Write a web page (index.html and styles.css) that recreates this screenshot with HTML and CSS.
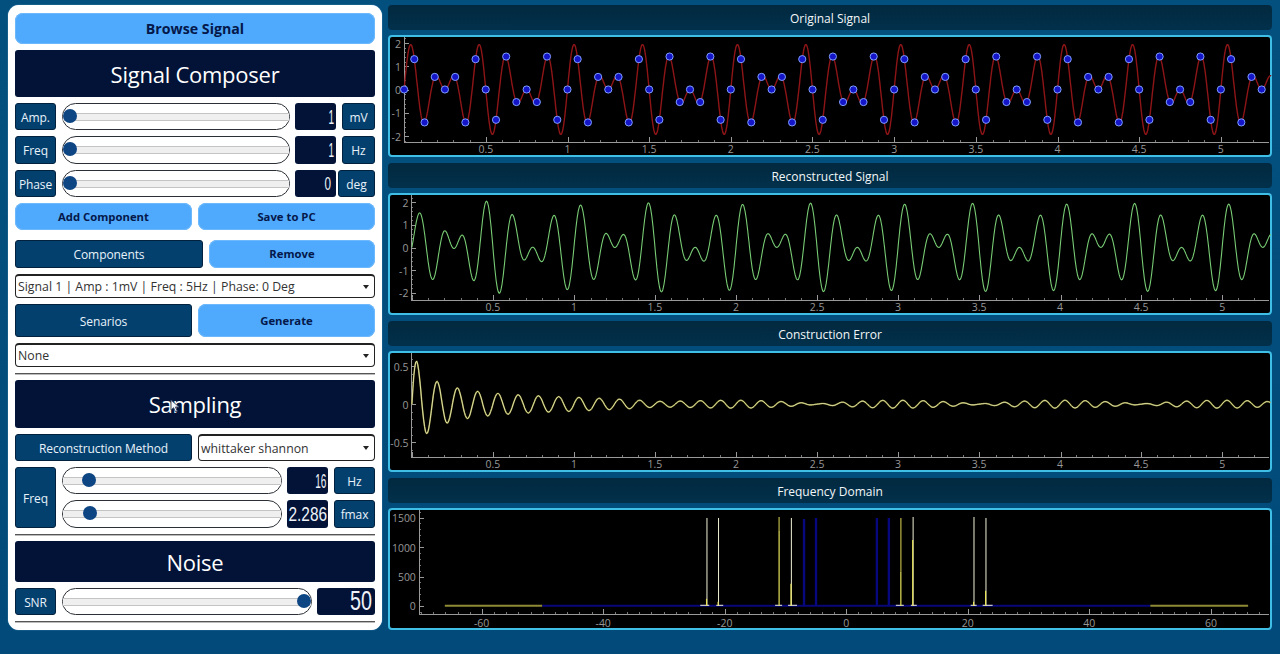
FILE: index.html
```html
<!DOCTYPE html>
<html lang="en">
<head>
<meta charset="utf-8">
<title>Signal Studio</title>
<link rel="stylesheet" href="styles.css">
</head>
<body>
<main class="app">
  <section class="panel">
    <button class="btn light browse">Browse Signal</button>
    <h2 class="heading h-composer">Signal Composer</h2>

    <div class="row r27">
      <span class="tag w41">Amp.</span>
      <div class="slider"><i class="groove"></i><i class="thumb" style="left:0px"></i></div>
      <output class="lcd w41"><span class="digits d-small">1</span></output>
      <span class="tag w33">mV</span>
    </div>
    <div class="row r28">
      <span class="tag w41">Freq</span>
      <div class="slider"><i class="groove"></i><i class="thumb" style="left:0px"></i></div>
      <output class="lcd w41"><span class="digits d-small">1</span></output>
      <span class="tag w33">Hz</span>
    </div>
    <div class="row r27">
      <span class="tag w41">Phase</span>
      <div class="slider"><i class="groove"></i><i class="thumb" style="left:0px"></i></div>
      <output class="lcd w41"><span class="digits d-zero">0</span></output>
      <span class="tag w37">deg</span>
    </div>

    <div class="row r27 halves">
      <button class="btn light lift">Add Component</button>
      <button class="btn light lift">Save to PC</button>
    </div>
    <div class="row r28 split-comp">
      <span class="tag">Components</span>
      <button class="btn light lift">Remove</button>
    </div>
    <div class="combo"><span>Signal 1 | Amp : 1mV | Freq : 5Hz | Phase: 0 Deg</span><b class="caret"></b></div>
    <div class="row r33 halves">
      <span class="tag">Senarios</span>
      <button class="btn light">Generate</button>
    </div>
    <div class="combo"><span>None</span><b class="caret"></b></div>
    <hr class="rule">

    <h2 class="heading h-sampling">Sampling
      <svg class="cursor" viewBox="0 0 10 14" width="10" height="14" aria-hidden="true"><path d="M1 1v10l2.6-2.3L5.5 13l1.8-.8-1.9-4.2H9z" fill="#f4f6fa" stroke="#3c4a66" stroke-width="1"/></svg>
    </h2>

    <div class="row r27 halves">
      <span class="tag">Reconstruction Method</span>
      <div class="combo in-row"><span>whittaker shannon</span><b class="caret"></b></div>
    </div>

    <div class="freq-block">
      <span class="tag w41">Freq</span>
      <div class="freq-rows">
        <div class="row r27">
          <div class="slider"><i class="groove"></i><i class="thumb" style="left:19px"></i></div>
          <output class="lcd w41"><span class="digits d-small">16</span></output>
          <span class="tag w41">Hz</span>
        </div>
        <div class="row r28">
          <div class="slider"><i class="groove"></i><i class="thumb" style="left:20px"></i></div>
          <output class="lcd w41"><span class="digits d-wide">2.286</span></output>
          <span class="tag w41">fmax</span>
        </div>
      </div>
    </div>
    <hr class="rule">

    <h2 class="heading h-noise">Noise</h2>
    <div class="row r27">
      <span class="tag w41">SNR</span>
      <div class="slider"><i class="groove"></i><i class="thumb" style="left:234px"></i></div>
      <output class="lcd w58"><span class="digits d-large">50</span></output>
    </div>
    <hr class="rule">
  </section>

  <section class="plots">
    <article class="group">
      <h3 class="plot-title">Original Signal</h3>
      <div class="plot" data-plot="original"></div>
    </article>
    <article class="group">
      <h3 class="plot-title">Reconstructed Signal</h3>
      <div class="plot" data-plot="reconstructed"></div>
    </article>
    <article class="group">
      <h3 class="plot-title">Construction Error</h3>
      <div class="plot" data-plot="error"></div>
    </article>
    <article class="group">
      <h3 class="plot-title">Frequency Domain</h3>
      <div class="plot" data-plot="frequency"></div>
    </article>
  </section>
</main>
<script src="charts.js"></script>
</body>
</html>
```
FILE: styles.css
```css
* { box-sizing: border-box; }
html, body { margin: 0; height: 100%; overflow: hidden; }
body {
  background: linear-gradient(#03507f, #014a79);
  font-family: "Open Sans", "Noto Sans", "Liberation Sans", sans-serif;
  color: #fff;
}
.app {
  display: flex;
  gap: 6px;
  height: 654px;
  padding: 5px 8px 24px;
}

/* left panel */
.panel {
  width: 374px;
  flex: none;
  background: #fff;
  border-radius: 11px;
  padding: 8px 7px 7px;
  display: flex;
  flex-direction: column;
  gap: 6px;
  box-shadow: 0 0 1px #bfe3ff;
}
.btn {
  border: 0;
  border-radius: 8px;
  font: inherit;
  padding: 0;
}
.light {
  background: #4fa9fc;
  color: #04184a;
  font-weight: 700;
  font-size: 11.3px;
  flex: 1;
  box-shadow: inset 0 0 0 1px #6db8fb;
}
.lift { padding-bottom: 1px; }
.browse { height: 31px; font-size: 14.2px; flex: none; }
.heading {
  margin: 0;
  background: #021337;
  border-radius: 3px;
  font-weight: 400;
  font-size: 22px;
  letter-spacing: -.25px;
  display: flex;
  align-items: center;
  justify-content: center;
  position: relative;
  flex: none;
}
.h-composer { height: 47px; }
.h-sampling { height: 48px; margin-top: -1px; }
.h-noise { height: 41px; margin-top: -1px; }
.cursor { position: absolute; left: 155px; top: 19px; }

.row { display: flex; gap: 6px; flex: none; align-items: stretch; }
.r27 { height: 27px; }
.r28 { height: 28px; }
.r33 { height: 33px; }
.halves > .btn,
.halves > .tag,
.halves > .combo { flex: none; width: 177px; }
.split-comp { margin-top: 4px; }
.split-comp > .tag { width: 188px; flex: none; }

.tag {
  background: #04406e;
  border: 1px solid #02213f;
  border-radius: 3px;
  color: #e8f2fa;
  font-size: 12px;
  padding-top: 1px;
  display: flex;
  align-items: center;
  justify-content: center;
  flex: none;
  white-space: nowrap;
  letter-spacing: -.1px;
}
.w41 { width: 41px; }
.w33 { width: 33px; }
.w37 { width: 37px; margin-left: -4px; }
.w58 { width: 58px; }

.slider {
  flex: 1;
  min-width: 0;
  position: relative;
  background: #fff;
  border: 1px solid #2b2f36;
  border-radius: 14px;
  margin-right: -1px;
  display: flex;
  align-items: center;
}
.groove {
  display: block;
  width: 100%;
  height: 8px;
  background: #efefef;
  border-top: 1px solid #c4c4c4;
  border-bottom: 1px solid #c4c4c4;
}
.thumb {
  position: absolute;
  top: 50%;
  width: 14px;
  height: 14px;
  margin-top: -8px;
  border-radius: 50%;
  background: #0e4583;
}

.lcd {
  flex: none;
  background: #021337;
  border-radius: 3px;
  display: flex;
  align-items: center;
  justify-content: flex-end;
  color: #eef2f8;
}
.digits {
  display: inline-block;
  font-family: "Liberation Sans", Arial, sans-serif;
  line-height: 1;
  transform-origin: right center;
}
.d-small { font-size: 20px; transform: scaleX(.5); margin-right: 2px; }
.d-zero { font-size: 18px; transform: scaleX(.65); margin-right: 5px; }
.d-wide { font-size: 20px; transform: scaleX(.77); margin-right: 1px; }
.d-large { font-size: 27px; transform: scaleX(.73); margin-right: 3px; }

.combo {
  height: 24px;
  flex: none;
  background: #fff;
  border: 1px solid #222;
  border-top-width: 2px;
  border-radius: 4px;
  color: #333;
  font-size: 12.3px;
  display: flex;
  align-items: center;
  justify-content: space-between;
  padding: 0 5px 0 2px;
  white-space: nowrap;
  overflow: hidden;
}
.combo.in-row { height: 27px; }
.caret {
  width: 0;
  height: 0;
  border: 3px solid transparent;
  border-top: 4px solid #222;
  border-bottom: 0;
  flex: none;
}
.rule {
  flex: none;
  width: 100%;
  height: 2px;
  margin: 0;
  border: 0;
  background: #555;
  border-bottom: 1px solid #bbb;
}
.freq-block { display: flex; gap: 6px; flex: none; }
.freq-block > .tag { height: 61px; }
.freq-rows { flex: 1; min-width: 0; display: flex; flex-direction: column; gap: 6px; }

/* plots */
.plots {
  flex: 1;
  min-width: 0;
  display: flex;
  flex-direction: column;
  gap: 6px;
}
.group { flex: 1 1 0; min-height: 0; display: flex; flex-direction: column; gap: 5px; }
.plot-title {
  margin: 0;
  height: 25px;
  flex: none;
  border-radius: 4px;
  background: linear-gradient(#02293f, #02304b);
  font-size: 12px;
  font-weight: 400;
  line-height: 27px;
  text-align: center;
  color: #f2f6f8;
  overflow: hidden;
}
.plot {
  flex: 1;
  min-height: 0;
  background: #000;
  border: 2px solid #3fbfe6;
  border-radius: 4px;
}
.plot svg { display: block; width: 100%; height: 100%; overflow: visible; }
.tick-label {
  fill: #989898;
  font-family: "Open Sans", "Liberation Sans", sans-serif;
  font-size: 10.5px;
}
.axis { stroke: #9a9a9a; stroke-width: 1; fill: none; shape-rendering: crispEdges; }
.minor { stroke: #777; stroke-width: 1; shape-rendering: crispEdges; }
.curve { fill: none; stroke-linejoin: round; }
.red { stroke: #8e1517; stroke-width: 1.4; }
.green { stroke: #78cb74; stroke-width: 1.1; }
.olive { stroke: #7c7c2a; stroke-width: 1.6; }
.pale { stroke: #f8f6c8; stroke-width: .8; }
.dot { fill: #1414c8; stroke: #7f9fff; stroke-width: 1; }
.base-olive { stroke: #8f8a35; stroke-width: 2; }
.base-blue { stroke: #07077a; stroke-width: 2; }
.spike-white { stroke: #f2f2d8; stroke-width: 1; }
.spike-yellow { stroke: #e8e45a; stroke-width: 1.2; }
.spike-olive { stroke: #8f8a35; stroke-width: 1.6; }
.spike-blue { stroke: #08087e; stroke-width: 2.4; }
```
FILE: charts.js
```js
(function () {
  var NS = 'http://www.w3.org/2000/svg';
  function el(parent, name, attrs, text) {
    var n = document.createElementNS(NS, name);
    for (var k in attrs) n.setAttribute(k, attrs[k]);
    if (text !== undefined) n.textContent = text;
    parent.appendChild(n);
    return n;
  }
  function signal(t) { return Math.sin(10 * Math.PI * t) + Math.sin(14 * Math.PI * t); }
  var fs = 16;
  function sinc(x) { return Math.abs(x) < 1e-9 ? 1 : Math.sin(Math.PI * x) / (Math.PI * x); }
  function recon(t) {
    var s = 0;
    for (var n = 0; n < 400; n++) s += signal(n / fs) * sinc(fs * t - n);
    return s;
  }

  function frame(name, cfg) {
    var host = document.querySelector('[data-plot="' + name + '"]');
    var w = 880, h = host.clientHeight;
    var svg = el(host, 'svg', { viewBox: '0 0 ' + w + ' ' + h });
    var ox = 390, oy = cfg.top + 2;
    var g = el(svg, 'g', { transform: 'translate(' + (-ox) + ' ' + (-oy) + ')' });
    var p = {
      g: g,
      X: function (v) { return cfg.x0 + v * cfg.sx; },
      Y: function (v) { return cfg.y0 - v * cfg.sy; }
    };
    var right = 1270, bottom = cfg.axisY, left = cfg.axisX;
    for (var xv = cfg.xmin; xv <= cfg.xmax + 1e-9; xv += cfg.xMinor) {
      var px = Math.round(p.X(xv)) + .5;
      if (px < left || px > right) continue;
      var major = Math.abs(xv / cfg.xMajor - Math.round(xv / cfg.xMajor)) < 1e-6;
      el(g, 'line', { x1: px, x2: px, y1: bottom, y2: bottom - (major ? 5 : 2), class: major ? 'axis' : 'minor' });
      if (major && Math.abs(xv) > 1e-9 || (major && cfg.zeroX)) {
        el(g, 'text', { x: p.X(xv), y: bottom + cfg.labelDy, 'text-anchor': 'middle', class: 'tick-label' }, +xv.toFixed(2));
      }
    }
    for (var yv = cfg.ymin; yv <= cfg.ymax + 1e-9; yv += cfg.yMinor) {
      var py = Math.round(p.Y(yv)) + .5;
      if (py < cfg.top + 2 || py > bottom) continue;
      var maj = Math.abs(yv / cfg.yMajor - Math.round(yv / cfg.yMajor)) < 1e-6;
      el(g, 'line', { x1: left, x2: left + (maj ? 5 : 2), y1: py, y2: py, class: maj ? 'axis' : 'minor' });
      if (maj) el(g, 'text', { x: left - 3, y: p.Y(yv) + 4.6, 'text-anchor': 'end', class: 'tick-label' }, +yv.toFixed(2));
    }
    el(g, 'path', { d: 'M' + (left + .5) + ' ' + (cfg.top + 2) + 'V' + (bottom + .5) + 'H' + right, class: 'axis' });
    return p;
  }

  function curve(p, fn, tMax, cls, step) {
    var pts = [];
    for (var t = 0; t <= tMax; t += step) pts.push(p.X(t).toFixed(1) + ',' + p.Y(fn(t)).toFixed(1));
    el(p.g, 'polyline', { points: pts.join(' '), class: 'curve ' + cls });
  }

  var timeX = { xmin: 0, xmax: 5.4, xMinor: .1, xMajor: .5, labelDy: 11 };
  function cfg(extra) {
    var c = {};
    for (var k in timeX) c[k] = timeX[k];
    for (var j in extra) c[j] = extra[j];
    return c;
  }

  // Original
  var a = frame('original', cfg({
    top: 35, x0: 403.2, sx: 163.7, y0: 89.6, sy: 23.3, axisX: 403, axisY: 142,
    ymin: -2.2, ymax: 2.2, yMinor: .2, yMajor: 1
  }));
  curve(a, signal, 5.31, 'red', .004);
  for (var n = 0; n <= 84; n++) {
    var t = n / fs;
    el(a.g, 'circle', { cx: a.X(t).toFixed(1), cy: a.Y(signal(t)).toFixed(1), r: 3.6, class: 'dot' });
  }

  // Reconstructed
  var b = frame('reconstructed', cfg({
    top: 193, x0: 411, sx: 162.4, y0: 247.5, sy: 22.6, axisX: 410.5, axisY: 300.5,
    ymin: -2.2, ymax: 2.4, yMinor: .2, yMajor: 1
  }));
  curve(b, recon, 5.3, 'green', .004);

  // Error: truncation error near the start, settling into the 1 s beat
  var c = frame('error', cfg({
    top: 352, x0: 411, sx: 162.4, y0: 405.3, sy: 75.8, axisX: 410.5, axisY: 458.5,
    ymin: -.7, ymax: .7, yMinor: .1, yMajor: .5
  }));
  function err(t) {
    var w = Math.exp(-Math.pow(t / 1.7, 4));
    var beat = (.048 * Math.abs(Math.cos(Math.PI * t)) + .004) * Math.sin(2 * Math.PI * 8 * (t - 3.03) + Math.PI / 2);
    return (signal(t) - recon(t)) * w * (1 + .5 * Math.min(t, 1)) + beat * (1 - w);
  }
  curve(c, err, 5.3, 'olive', .006);
  curve(c, err, 5.3, 'pale', .006);

  // Frequency
  var d = frame('frequency', {
    top: 509, x0: 846.3, sx: 6.09, y0: 607, sy: .059, axisX: 418, axisY: 615,
    xmin: -70, xmax: 70, xMinor: 2, xMajor: 20, labelDy: 13.5, zeroX: true,
    ymin: -100, ymax: 1600, yMinor: 100, yMajor: 500
  });
  function seg(x1, y1, x2, y2, cls) { el(d.g, 'line', { x1: x1, y1: y1, x2: x2, y2: y2, class: cls }); }
  seg(444, 607, 541.7, 607, 'base-olive');
  seg(541.7, 607, 1151, 607, 'base-blue');
  seg(1151, 607, 1249, 607, 'base-olive');
  [[877, 519], [889, 519], [804, 520], [816, 519]].forEach(function (s) {
    seg(s[0], s[1], s[0], 607, 'spike-blue');
  });
  [[700, 709], [716, 723], [775, 782], [788, 797], [896, 904], [911, 917], [971, 977], [983, 993]].forEach(function (s) {
    seg(s[0], 606.5, s[1], 606.5, 'spike-white');
  });
  [[706.7, 519, 600], [718.3, 519, 603], [791.3, 519, 585], [913.3, 518, 541], [974.3, 518, 603], [986.3, 519, 592]].forEach(function (s) {
    seg(s[0], s[1], s[0], 607, 'spike-white');
    seg(s[0] - .4, s[2], s[0] - .4, 607, 'spike-yellow');
  });
  seg(779, 518, 779, 532, 'spike-olive');
  seg(779, 532, 779, 607, 'spike-yellow');
  seg(901, 519, 901, 573, 'spike-olive');
  seg(901, 573, 901, 607, 'spike-yellow');
})();
```
